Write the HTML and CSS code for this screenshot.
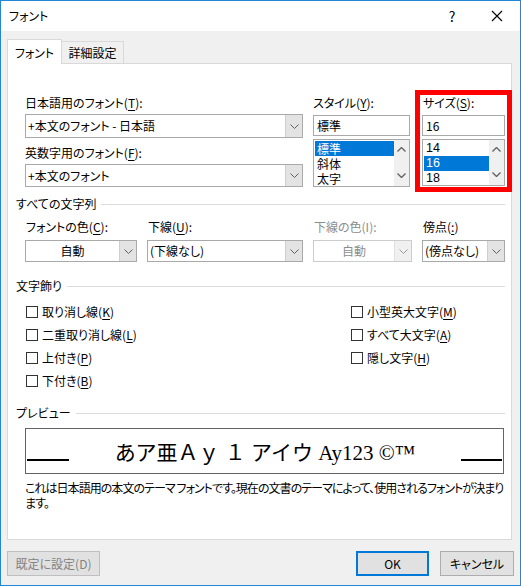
FILE: index.html
```html
<!DOCTYPE html>
<html lang="ja">
<head>
<meta charset="utf-8">
<title>フォント</title>
<link rel="stylesheet" href="styles.css">
</head>
<body>
<div class="window">
  <div class="titlebar">
    <span class="title">フォント</span>
    <span class="help">?</span>
    <span class="close"><svg width="12" height="12" viewBox="0 0 12 12"><path d="M1 1L11 11M11 1L1 11" stroke="#000" stroke-width="1.1" fill="none"/></svg></span>
  </div>
  <div class="body">
    <div class="tabs">
      <div class="tab active">フォント</div>
      <div class="tab">詳細設定</div>
    </div>
    <div class="panel">
      <div class="row-fonts">
        <div class="col-font">
          <div class="label">日本語用のフォント(<u>T</u>):</div>
          <div class="combo tall"><span class="val">+本文のフォント - 日本語</span><span class="drop"><svg width="9" height="5" viewBox="0 0 9 5"><path d="M0.5 0.5L4.5 4.5L8.5 0.5" stroke="#606060" fill="none"/></svg></span></div>
          <div class="label second">英数字用のフォント(<u>F</u>):</div>
          <div class="combo mid"><span class="val">+本文のフォント</span><span class="drop"><svg width="9" height="5" viewBox="0 0 9 5"><path d="M0.5 0.5L4.5 4.5L8.5 0.5" stroke="#606060" fill="none"/></svg></span></div>
        </div>
        <div class="col-style">
          <div class="label">スタイル(<u>Y</u>):</div>
          <div class="input">標準</div>
          <div class="listbox">
            <div class="items">
              <div class="item sel">標準</div>
              <div class="item">斜体</div>
              <div class="item">太字</div>
            </div>
            <div class="scroll">
              <svg width="9" height="5" viewBox="0 0 9 5"><path d="M0.5 4.5L4.5 0.5L8.5 4.5" stroke="#606060" stroke-width="1.3" fill="none"/></svg>
              <svg width="9" height="5" viewBox="0 0 9 5"><path d="M0.5 0.5L4.5 4.5L8.5 0.5" stroke="#606060" stroke-width="1.3" fill="none"/></svg>
            </div>
          </div>
        </div>
        <div class="col-size">
          <div class="label">サイズ(<u>S</u>):</div>
          <div class="input">16</div>
          <div class="listbox">
            <div class="items nums">
              <div class="item">14</div>
              <div class="item sel">16</div>
              <div class="item">18</div>
            </div>
            <div class="scroll">
              <svg width="9" height="5" viewBox="0 0 9 5"><path d="M0.5 4.5L4.5 0.5L8.5 4.5" stroke="#606060" stroke-width="1.3" fill="none"/></svg>
              <svg width="9" height="5" viewBox="0 0 9 5"><path d="M0.5 0.5L4.5 4.5L8.5 0.5" stroke="#606060" stroke-width="1.3" fill="none"/></svg>
            </div>
          </div>
        </div>
      </div>

      <div class="section s1">すべての文字列</div>
      <div class="grid4">
        <div class="label">フォントの色(<u>C</u>):</div>
        <div class="label">下線(<u>U</u>):</div>
        <div class="label disabled">下線の色(I):</div>
        <div class="label">傍点(<u>:</u>)</div>
        <div class="combo short center"><span class="val">自動</span><span class="drop"><svg width="9" height="5" viewBox="0 0 9 5"><path d="M0.5 0.5L4.5 4.5L8.5 0.5" stroke="#606060" fill="none"/></svg></span></div>
        <div class="combo short"><span class="val">(下線なし)</span><span class="drop"><svg width="9" height="5" viewBox="0 0 9 5"><path d="M0.5 0.5L4.5 4.5L8.5 0.5" stroke="#606060" fill="none"/></svg></span></div>
        <div class="combo short center off"><span class="val">自動</span><span class="drop"><svg width="9" height="5" viewBox="0 0 9 5"><path d="M0.5 0.5L4.5 4.5L8.5 0.5" stroke="#9a9a9a" fill="none"/></svg></span></div>
        <div class="combo short"><span class="val">(傍点なし)</span><span class="drop"><svg width="9" height="5" viewBox="0 0 9 5"><path d="M0.5 0.5L4.5 4.5L8.5 0.5" stroke="#606060" fill="none"/></svg></span></div>
      </div>

      <div class="section s2">文字飾り</div>
      <div class="checks">
        <label class="check"><span class="box"></span>取り消し線(<u>K</u>)</label>
        <label class="check"><span class="box"></span>小型英大文字(<u>M</u>)</label>
        <label class="check"><span class="box"></span>二重取り消し線(<u>L</u>)</label>
        <label class="check"><span class="box"></span>すべて大文字(<u>A</u>)</label>
        <label class="check"><span class="box"></span>上付き(<u>P</u>)</label>
        <label class="check"><span class="box"></span>隠し文字(<u>H</u>)</label>
        <label class="check"><span class="box"></span>下付き(<u>B</u>)</label>
      </div>

      <div class="section s3">プレビュー</div>
      <div class="preview">
        <span class="rule"></span>
        <span class="sample">あア亜Ａｙ １ アイウ Ay123 ©™</span>
        <span class="rule"></span>
      </div>
      <p class="desc">これは日本語用の本文のテーマ フォントです。現在の文書のテーマによって、使用されるフォントが決まります。</p>
    </div>
    <div class="footer">
      <button class="btn disabled-btn">既定に設定(D)</button>
      <span class="spacer"></span>
      <button class="btn ok">OK</button>
      <button class="btn cancel">キャンセル</button>
    </div>
  </div>
</div>
</body>
</html>
```

FILE: styles.css
```css
* { box-sizing: border-box; }
html, body { margin: 0; padding: 0; }
body {
  font-family: "Noto Sans CJK JP", "Noto Sans", sans-serif;
  font-size: 12px;
  font-feature-settings: "palt";
  color: #000;
  background: #fff;
}
u { text-decoration-thickness: 1px; text-underline-offset: 2px; }

.window {
  width: 521px;
  height: 586px;
  border: 1px solid #2186d8;
  display: flex;
  flex-direction: column;
  background: #f0f0f0;
}

.titlebar {
  height: 30px;
  background: #fff;
  display: flex;
  align-items: center;
  padding-left: 8px;
  flex-shrink: 0;
}
.title { flex: 1; line-height: 16px; }
.help { font-size: 14px; width: 14px; margin-right: 32px; text-align: center; }
.close { width: 12px; height: 12px; margin-right: 17px; display: flex; }

.body {
  flex: 1;
  padding: 8px 6px 0 6px;
  display: flex;
  flex-direction: column;
}

.tabs { display: flex; align-items: flex-end; height: 24px; }
.tab {
  border: 1px solid #d9d9d9;
  border-bottom: none;
  line-height: 21px;
  height: 22px;
  padding: 0;
  width: 62px;
  text-align: center;
  background: #f0f0f0;
  border-left: none;
  white-space: nowrap;
}
.tab.active {
  width: 55px;
  height: 25px;
  line-height: 25px;
  background: #fff;
  border-left: 1px solid #d9d9d9;
  margin-bottom: -1px;
  position: relative;
  z-index: 1;
}

.panel {
  width: 505px;
  height: 477px;
  background: #fff;
  border: 1px solid #d9d9d9;
  padding: 0 6px 0 8px;
}

.label { line-height: 16px; height: 16px; white-space: nowrap; }
.label.disabled { color: #8d8d8d; }

.row-fonts {
  display: flex;
  margin-top: 26px;
  padding-left: 9px;
  width: 496px;
}
.col-font { width: 278px; flex-shrink: 0; padding-top: 5px; }
.col-style { width: 97px; flex-shrink: 0; margin-left: 10px; padding-top: 5px; }
.col-size {
  width: 97px;
  flex-shrink: 0;
  margin-left: 5px;
  border: 5px solid #ff0000;
  padding: 0 2px;
  height: 102px;
}
.col-size .label { padding-left: 1px; }
.label.second { margin-top: 7px; }

.combo {
  display: flex;
  border: 1px solid #a9a9a9;
  background: #fff;
  margin-top: 3px;
}
.combo.tall { height: 24px; }
.combo.mid { height: 23px; }
.combo.short { height: 22px; margin-top: 5px; }
.combo .val { flex: 1; padding-left: 2px; line-height: 20px; white-space: nowrap; overflow: hidden; }
.combo.tall .val { line-height: 22px; }
.combo.mid .val { line-height: 21px; }
.combo.center .val { text-align: center; padding-left: 0; }
.combo .drop {
  width: 17px;
  background: #e3e3e3;
  border-left: 1px solid #cfcfcf;
  display: flex;
  align-items: center;
  justify-content: center;
}
.combo.off { border-color: #cccccc; }
.combo.off .val { color: #8d8d8d; }
.combo.off .drop { background: #f0f0f0; border-left-color: #e0e0e0; }

.input {
  margin-top: 4px;
  height: 21px;
  border: 1px solid #a9a9a9;
  line-height: 19px;
  padding-left: 3px;
}
.listbox {
  margin-top: 3px;
  height: 48px;
  border: 1px solid #a9a9a9;
  display: flex;
  padding: 1px 0 0 1px;
}
.col-size .listbox { height: 47px; }
.items { flex: 1; }
.item { height: 15px; line-height: 15px; padding-left: 2px; overflow: hidden; }
.nums .item { font-family: "Liberation Sans", sans-serif; font-size: 12.5px; }
.item.sel { background: #0078d7; color: #fff; }
.scroll {
  width: 15px;
  background: #f0f0f0;
  display: flex;
  flex-direction: column;
  align-items: center;
  justify-content: space-between;
  padding: 7px 0 8px;
  margin-top: -1px;
}

.section {
  display: flex;
  align-items: center;
  line-height: 16px;
  height: 16px;
  white-space: nowrap;
}
.section::after {
  content: "";
  flex: 1;
  height: 1px;
  background: #dcdcdc;
  margin-left: 5px;
}
.s1 { margin-top: 4px; }
.s2 { margin-top: 16px; }
.s3 { margin-top: 13px; }

.grid4 {
  display: grid;
  grid-template-columns: 112px 156px 99px 83px;
  column-gap: 10px;
  padding-left: 9px;
  margin-top: 7px;
}
.grid4 .label { padding-left: 1px; }

.checks {
  display: grid;
  grid-template-columns: 325px 140px;
  padding-left: 10px;
  margin-top: 6px;
}
.check {
  display: flex;
  align-items: center;
  height: 23px;
  white-space: nowrap;
}
.box {
  width: 12px;
  height: 12px;
  border: 1px solid #333;
  background: #fff;
  margin-right: 4px;
}

.preview {
  margin: 7px 0 0 9px;
  width: 479px;
  height: 46px;
  border: 1px solid #646464;
  display: flex;
  align-items: center;
  justify-content: space-between;
  padding: 0 1px;
}
.rule {
  width: 42px;
  height: 2px;
  background: #000;
  align-self: flex-end;
  margin-bottom: 12px;
}
.preview .rule:last-child { width: 41px; }
.sample {
  font-family: "Liberation Serif", "Noto Sans CJK JP", serif;
  font-size: 21px;
  font-feature-settings: normal;
  white-space: nowrap;
}

.desc {
  margin: 6px 0 0 9px;
  line-height: 15px;
  width: 484px;
  letter-spacing: -0.95px;
}

.footer {
  display: flex;
  margin-top: 11px;
}
.spacer { flex: 1; }
.btn {
  font-family: inherit;
  font-size: 12px;
  font-feature-settings: "palt";
  height: 25px;
  background: #e1e1e1;
  border: 1px solid #adadad;
  color: #000;
  padding: 0;
  margin: 0;
}
.disabled-btn { width: 93px; color: #838383; border-color: #bfbfbf; }
.ok { width: 73px; border: 2px solid #0078d7; }
.cancel { width: 74px; margin-left: 11px; }
```
